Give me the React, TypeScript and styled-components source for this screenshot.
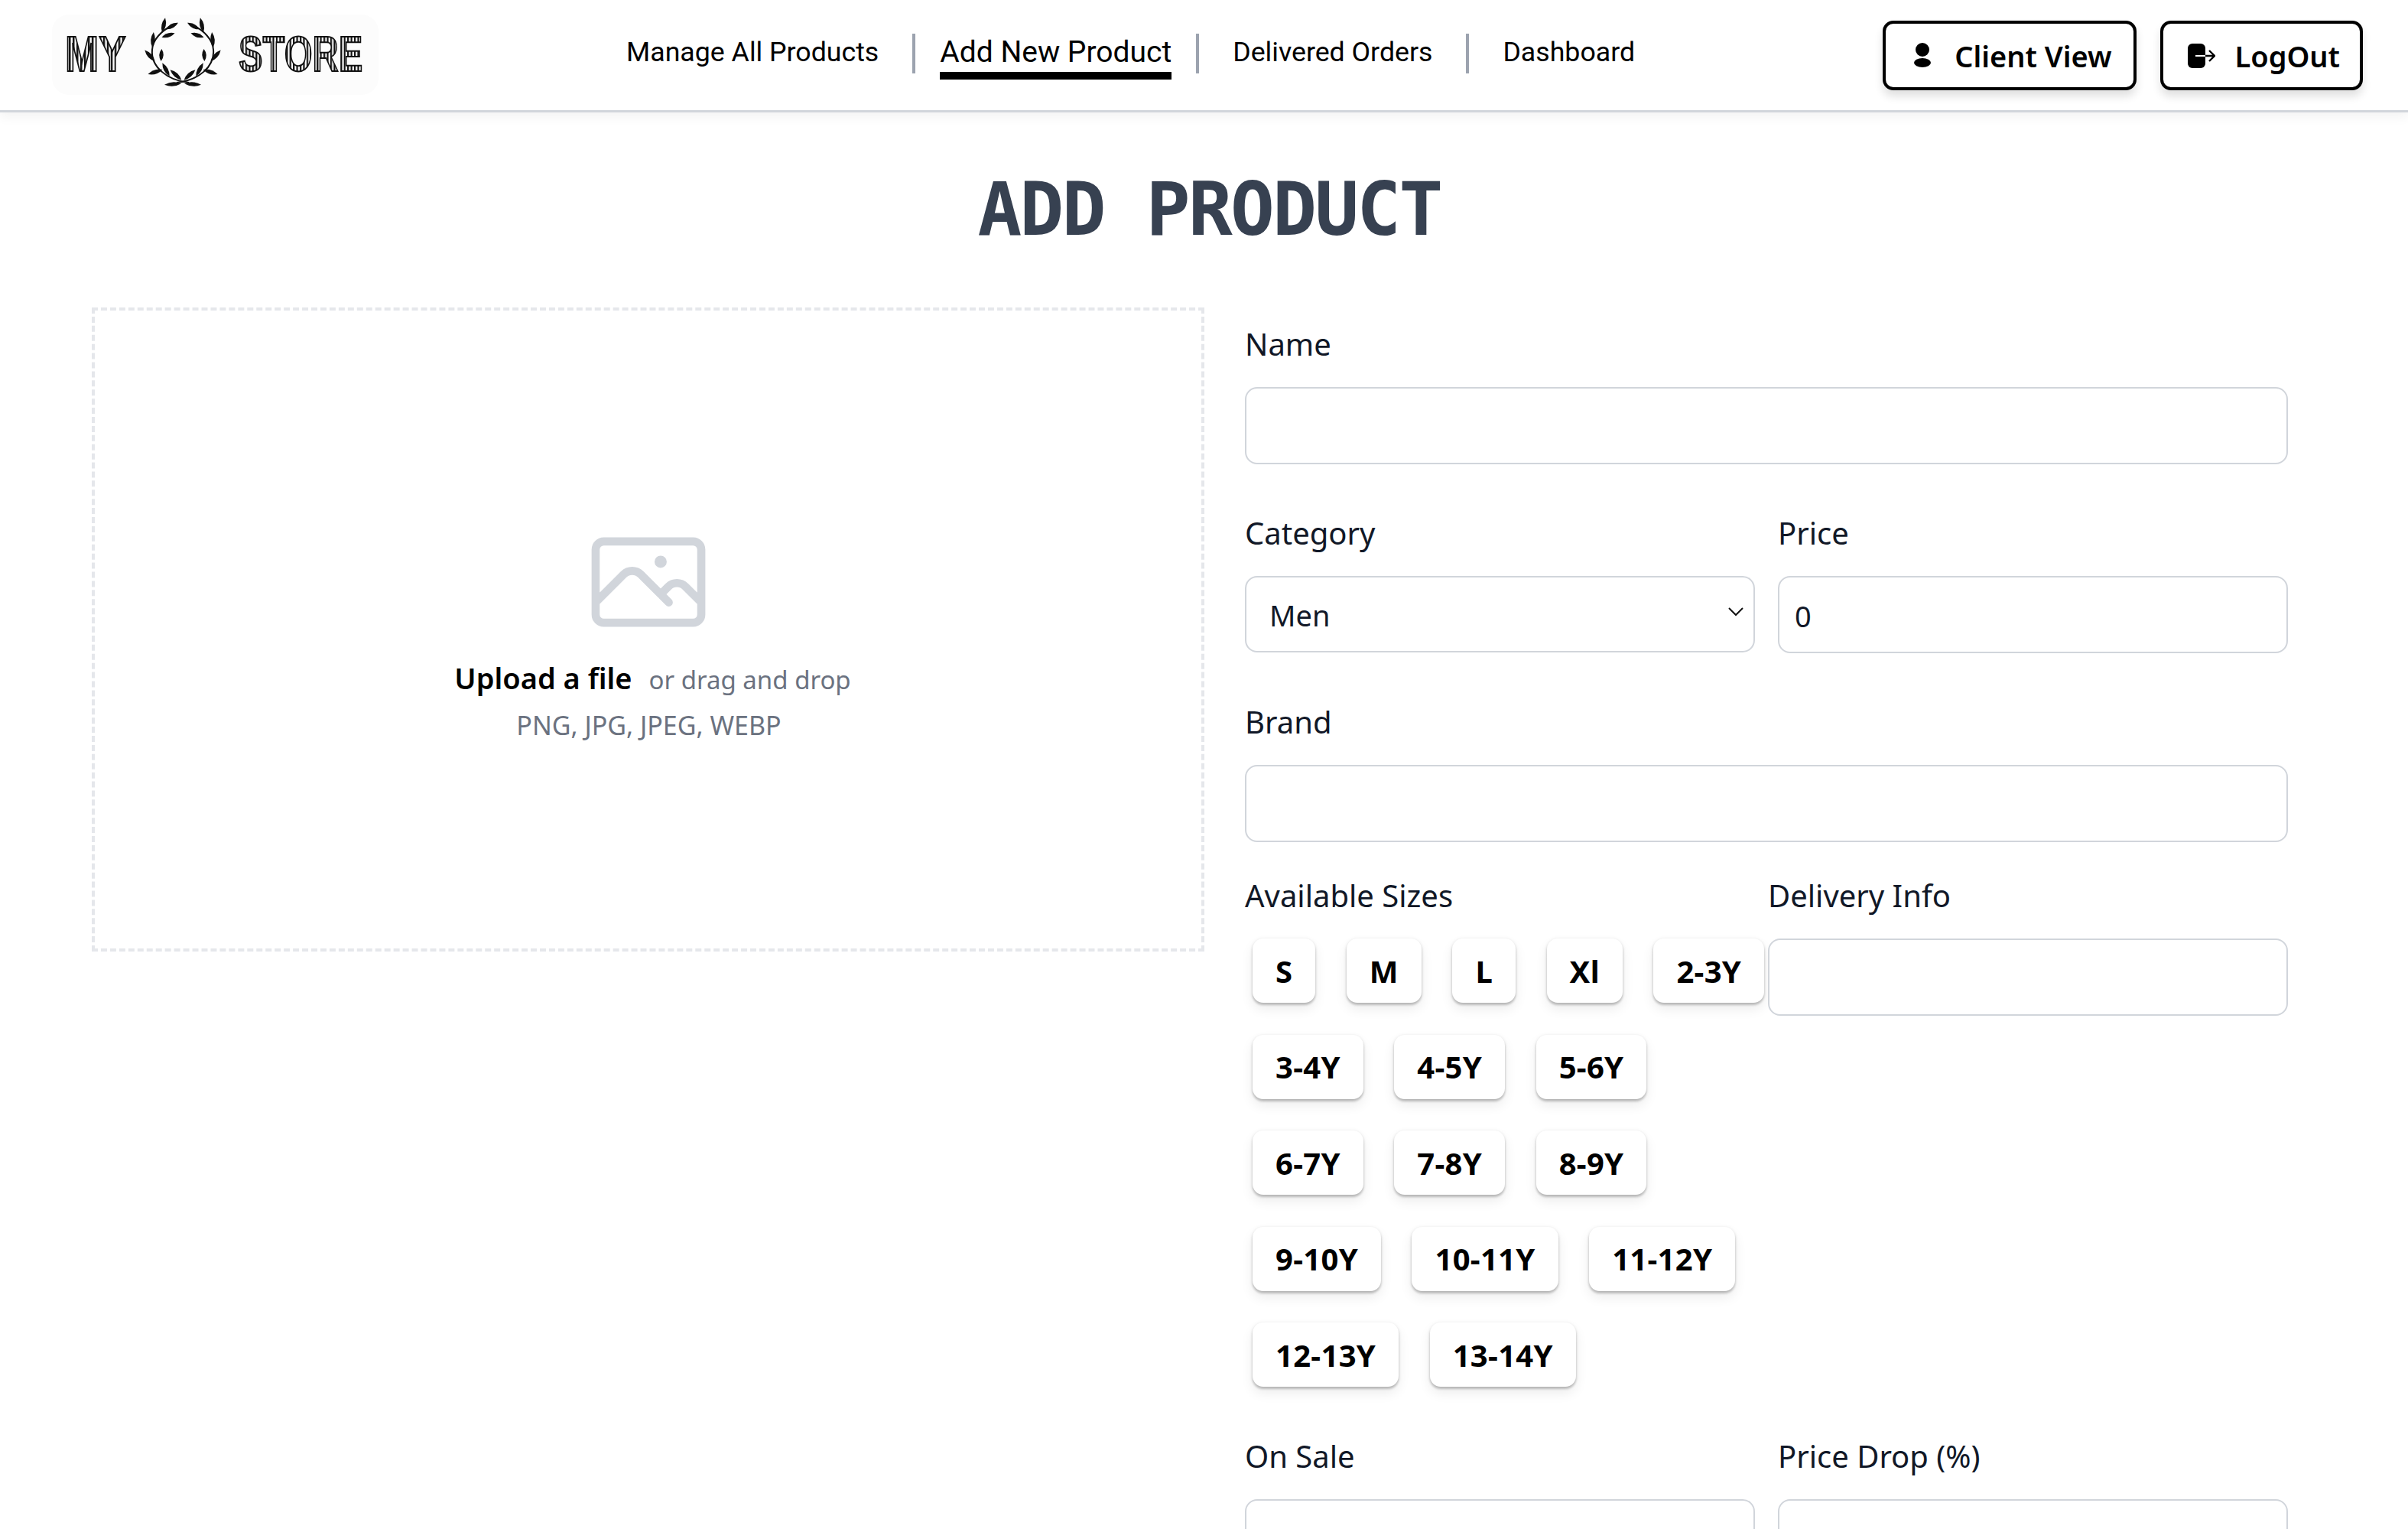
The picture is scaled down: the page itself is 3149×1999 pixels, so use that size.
import React from 'react';
import styled, {createGlobalStyle} from 'styled-components';

const GlobalStyle = createGlobalStyle`
    html, body {
        margin: 0;
        padding: 0;
        height: 100%;
        overflow: hidden;
        background: #fff;
        color: #111827;
        font-family: "Noto Sans", sans-serif;
    }
    * { box-sizing: border-box; }
`;

const Header = styled.header`
    display: flex;
    justify-content: space-between;
    align-items: flex-start;
    height: 147px;
    padding: 0 59px 0 68px;
    border-bottom: 3px solid #d1d5db;
    box-shadow: 0 6px 14px rgba(0, 0, 0, 0.05);
`;

const LogoBox = styled.div`
    width: 427px;
    height: 105px;
    margin-top: 19px;
    background: #fcfcfc;
    border-radius: 22px;
    svg { display: block; }
`;

const Nav = styled.nav`
    display: flex;
    align-items: flex-start;
    gap: 44px;
    margin-top: 44px;
    font-family: Roboto, sans-serif;
    font-size: 35.7px;
    line-height: 44px;
    color: #000;
`;

const NavLink = styled.a<{$active?: boolean}>`
    display: block;
    padding-top: 2px;
    padding-bottom: ${p => p.$active ? '4px' : '0'};
    margin: ${p => p.$active ? '0 -12px 0 -12px' : '0'};
    font-size: ${p => p.$active ? '39px' : '35.7px'};
    border-bottom: ${p => p.$active ? '10px solid #000' : 'none'};
`;

const NavSep = styled.span`
    display: block;
    width: 4px;
    height: 52px;
    background: #9ca3af;
`;

const Actions = styled.div`
    display: flex;
    gap: 31px;
    margin-top: 27px;
`;

const ActionButton = styled.button<{$gap: number; $left: number; $right: number}>`
    display: flex;
    align-items: center;
    gap: ${p => p.$gap}px;
    height: 91px;
    padding: 0 ${p => p.$right - 4}px 0 ${p => p.$left - 4}px;
    background: #fff;
    border: 4px solid #000;
    border-radius: 14px;
    box-shadow: 0 8px 12px rgba(0, 0, 0, 0.12);
    font-family: "Noto Sans", sans-serif;
    font-size: 38px;
    font-weight: 600;
    color: #000;
    svg { display: block; flex: none; }
`;

const Title = styled.h1`
    margin: 0;
    padding: 71px 0 0 14px;
    text-align: center;
    font-family: "DejaVu Sans Mono", monospace;
    font-size: 96px;
    font-weight: 700;
    line-height: 112px;
    letter-spacing: -2.7px;
    color: #374151;
`;

const Main = styled.main`
    display: flex;
    align-items: flex-start;
    gap: 53px;
    padding: 72px 157px 0 120px;
`;

const UploadBox = styled.div`
    display: flex;
    flex-direction: column;
    align-items: center;
    width: 1455px;
    height: 842px;
    padding-top: 270px;
    border: 4px dashed #e5e7eb;
    svg { display: block; color: #d1d5db; }
`;

const UploadLine = styled.div`
    display: flex;
    align-items: baseline;
    gap: 22px;
    margin: 10px 0 0 12px;
    height: 60px;
    line-height: 60px;
`;

const UploadLink = styled.span`
    font-size: 38px;
    font-weight: 600;
    color: #000;
`;

const UploadHint = styled.span`
    font-size: 33px;
    color: #6b7280;
`;

const FileTypes = styled.div`
    margin: 2px 0 0 2px;
    font-size: 34px;
    line-height: 60px;
    color: #6b7280;
`;

const Form = styled.form`
    display: flex;
    flex-direction: column;
    flex: 0 0 1364px;
    padding-top: 22px;
`;

const Row = styled.div<{$top?: number}>`
    display: flex;
    gap: 30px;
    margin-top: ${p => p.$top ?? 0}px;
`;

const Field = styled.div`
    flex: 1 1 0;
    min-width: 0;
`;

const Label = styled.label`
    display: block;
    padding-top: 2px;
    margin-bottom: 32px;
    font-size: 40px;
    line-height: 48px;
    color: #111827;
`;

const Input = styled.input`
    display: block;
    width: 100%;
    height: 101px;
    padding: 2px 20px 0;
    background: #fff;
    border: 2px solid #d1d5db;
    border-radius: 16px;
    font-family: "Noto Sans", sans-serif;
    font-size: 38px;
    color: #111827;
    outline: none;
`;

const SelectWrap = styled.div`
    position: relative;
    svg {
        position: absolute;
        top: 40px;
        right: 14px;
    }
`;

const Select = styled.select`
    display: block;
    width: 100%;
    height: 100px;
    padding: 2px 30px 0;
    appearance: none;
    background: #fff;
    border: 2px solid #d1d5db;
    border-radius: 16px;
    font-family: "Noto Sans", sans-serif;
    font-size: 38px;
    color: #111827;
`;

const SizesRow = styled.div`
    display: flex;
    margin-top: 44px;
`;

const SizesColumn = styled.div`
    flex: 0 0 684px;
`;

const SizeList = styled.div`
    display: flex;
    flex-wrap: wrap;
    gap: 41.5px 40.5px;
    padding-left: 10px;
`;

const SizeButton = styled.button`
    height: 84px;
    padding: 0 30px;
    background: #fff;
    border: none;
    border-radius: 14px;
    box-shadow: 0 1px 4px rgba(0, 0, 0, 0.12), 0 3px 3px rgba(0, 0, 0, 0.18), 0 8px 16px rgba(0, 0, 0, 0.08);
    font-family: "Noto Sans", sans-serif;
    font-size: 40px;
    font-weight: 700;
    letter-spacing: 0.3px;
    color: #000;
`;

const DeliveryField = styled.div`
    flex: 1 1 0;
`;

const SaleRow = styled(Row)`
    margin-top: 65px;
`;

const sizes = ['S', 'M', 'L', 'Xl', '2-3Y', '3-4Y', '4-5Y', '5-6Y', '6-7Y', '7-8Y', '8-9Y', '9-10Y', '10-11Y', '11-12Y', '12-13Y', '13-14Y'];

// x, y, rotation, half length of each leaf on the left branch of the wreath
const leaves = [
    [146, 14, 12, 10], [157, 15, 62, 9], [132, 33, 5, 10], [152, 27, 72, 9],
    [128, 54, -42, 10], [143, 53, 3, 8], [149, 72, -28, 10], [162, 79, -48, 10],
    [135, 75, 72, 10], [158, 91, 86, 11],
];

const Logo = () => (
    <svg width="427" height="105" viewBox="0 0 427 105">
        <defs>
            <pattern id="logoLines" width="6" height="6" patternUnits="userSpaceOnUse">
                <rect width="6" height="6" fill="#fcfcfc"/>
                <rect width="3" height="6" fill="#111"/>
            </pattern>
        </defs>
        <g fontFamily="Liberation Sans" fontWeight="700" fontSize="64" fill="url(#logoLines)" stroke="#111" strokeWidth="2">
            <text transform="translate(17 74) scale(0.83 1)">MY</text>
            <text transform="translate(244 74) scale(0.74 1)">STORE</text>
        </g>
        {[0, 1].map(side => (
            <g key={side} transform={side ? 'translate(342 0) scale(-1 1)' : undefined} fill="#111">
                <path d="M179 89 C150 86 129 68 131 46 C132 32 144 21 156 15" fill="none" stroke="#111" strokeWidth="2"/>
                {leaves.map(([x, y, r, l], i) => (
                    <path key={i} transform={`translate(${x} ${y}) rotate(${r})`} d={`M0 ${-l} Q5.5 0 0 ${l} Q-5.5 0 0 ${-l}Z`}/>
                ))}
            </g>
        ))}
    </svg>
);

const UserIcon = () => (
    <svg width="22" height="34" viewBox="0 0 22 34" fill="#000">
        <circle cx="11" cy="9" r="9"/>
        <ellipse cx="11" cy="26" rx="11" ry="6"/>
    </svg>
);

const LogOutIcon = () => (
    <svg width="36" height="32" viewBox="0 0 36 32">
        <rect x="0" y="0" width="23" height="32" rx="6" fill="#000"/>
        <path d="M10 16h13" stroke="#fff" strokeWidth="2"/>
        <path d="M23 16h11M28 9l7 7-7 7" fill="none" stroke="#000" strokeWidth="2.4"/>
    </svg>
);

const App = () => {
    return <>
        <GlobalStyle/>
        <Header>
            <LogoBox><Logo/></LogoBox>
            <Nav>
                <NavLink>Manage All Products</NavLink>
                <NavSep/>
                <NavLink $active>Add New Product</NavLink>
                <NavSep/>
                <NavLink>Delivered Orders</NavLink>
                <NavSep/>
                <NavLink>Dashboard</NavLink>
            </Nav>
            <Actions>
                <ActionButton $gap={31} $left={41} $right={33}><UserIcon/>Client View</ActionButton>
                <ActionButton $gap={25} $left={36} $right={30}><LogOutIcon/>LogOut</ActionButton>
            </Actions>
        </Header>
        <Title>ADD PRODUCT</Title>
        <Main>
            <UploadBox>
                <svg width="170" height="170" viewBox="0 0 24 24" fill="none" stroke="currentColor" strokeWidth="1.5" strokeLinecap="round" strokeLinejoin="round">
                    <path d="M2.25 15.75l5.159-5.159a2.25 2.25 0 013.182 0l5.159 5.159m-1.5-1.5l1.409-1.409a2.25 2.25 0 013.182 0l2.909 2.909m-18 3.75h16.5a1.5 1.5 0 001.5-1.5V6a1.5 1.5 0 00-1.5-1.5H3.75A1.5 1.5 0 002.25 6v12a1.5 1.5 0 001.5 1.5zm10.5-11.25h.008v.008h-.008V8.25zm.375 0a.375.375 0 11-.75 0 .375.375 0 01.75 0z"/>
                </svg>
                <UploadLine>
                    <UploadLink>Upload a file</UploadLink>
                    <UploadHint>or drag and drop</UploadHint>
                </UploadLine>
                <FileTypes>PNG, JPG, JPEG, WEBP</FileTypes>
            </UploadBox>
            <Form>
                <Field>
                    <Label>Name</Label>
                    <Input type="text"/>
                </Field>
                <Row $top={64}>
                    <Field>
                        <Label>Category</Label>
                        <SelectWrap>
                            <Select defaultValue="Men"><option>Men</option></Select>
                            <svg width="22" height="14" viewBox="0 0 22 14" fill="none" stroke="#111" strokeWidth="2"><path d="M2 2l9 9 9-9"/></svg>
                        </SelectWrap>
                    </Field>
                    <Field>
                        <Label>Price</Label>
                        <Input type="number" defaultValue={0}/>
                    </Field>
                </Row>
                <Row $top={64}>
                    <Field>
                        <Label>Brand</Label>
                        <Input type="text"/>
                    </Field>
                </Row>
                <SizesRow>
                    <SizesColumn>
                        <Label>Available Sizes</Label>
                        <SizeList>
                            {sizes.map(size => <SizeButton type="button" key={size}>{size}</SizeButton>)}
                        </SizeList>
                    </SizesColumn>
                    <DeliveryField>
                        <Label>Delivery Info</Label>
                        <Input type="text"/>
                    </DeliveryField>
                </SizesRow>
                <SaleRow>
                    <Field>
                        <Label>On Sale</Label>
                        <Input type="text"/>
                    </Field>
                    <Field>
                        <Label>Price Drop (%)</Label>
                        <Input type="text"/>
                    </Field>
                </SaleRow>
            </Form>
        </Main>
    </>;
};

export default App;
